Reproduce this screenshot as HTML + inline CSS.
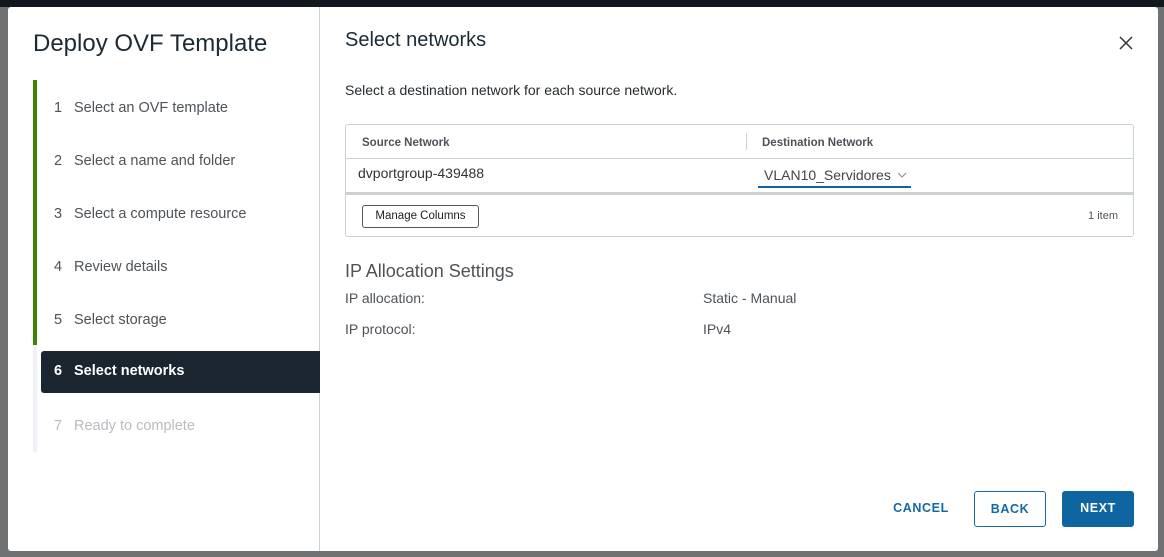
<!DOCTYPE html>
<html><head><meta charset="utf-8"><style>
*{box-sizing:border-box;margin:0;padding:0}
body{width:1164px;height:557px;overflow:hidden;background:#6f7173;font-family:"Liberation Sans",sans-serif;position:relative}
.top{position:absolute;left:0;top:0;width:1164px;height:7px;background:#111820}
.modal{position:absolute;left:8px;top:7px;width:1150px;height:544px;background:#fff;border-radius:3px;overflow:hidden}
.left{position:absolute;left:0;top:0;width:312px;height:544px;border-right:1px solid #c9d1d9}
.title{position:absolute;left:25px;top:23px;font-size:24px;color:#1c2a33}
.prog{position:absolute;left:25px;top:73px;width:4px;height:265px;background:#3c8500}
.prog2{position:absolute;left:25px;top:338px;width:4px;height:107px;background:#eef1f5}
.step{position:absolute;left:46px;font-size:14.5px;color:#4d5358}
.step span{display:inline-block;width:20px}
.active{position:absolute;left:33px;top:344px;width:279px;height:42px;background:#1b2530;border-radius:3px 0 0 3px;color:#fff;font-weight:bold;font-size:14.5px;padding:12px 0 0 13px}
.active span{display:inline-block;width:20px}
.h{position:absolute;left:337px;top:22px;font-size:20px;color:#1c2a33}
.x{position:absolute;left:1111px;top:29px}
.desc{position:absolute;left:337px;top:75px;font-size:14px;color:#262c30}
.grid{position:absolute;left:337px;top:117px;width:789px;height:113px;border:1px solid #c9d1d9;border-radius:3px}
.hdr{position:absolute;top:0;left:0;width:100%;height:34px;border-bottom:1px solid #c9d1d9;font-size:11.5px;font-weight:bold;color:#4d5358}
.hdr div{position:absolute;top:12px}
.hdr .sep{position:absolute;left:400px;top:8px;width:1px;height:17px;background:#c9d1d9}
.row{position:absolute;top:34px;left:0;width:100%;height:36px;border-bottom:3px solid #cdd1d4;font-size:14px;color:#333}
.foot{position:absolute;top:72px;left:0;width:100%}
.btn{position:absolute;left:16px;top:8px;width:117px;height:23px;border:1px solid #565656;border-radius:3px;font-size:11.5px;color:#222;text-align:center;line-height:21px}
.lbl{position:absolute;font-size:14px;color:#4d5358}
.b{position:absolute;top:484px;height:36px;font-size:12.5px;font-weight:bold;letter-spacing:.6px;text-align:center;line-height:34px;border-radius:3px}
</style></head><body>
<div class="top"></div>
<div class="modal">
 <div class="left">
  <div class="title">Deploy OVF Template</div>
  <div class="prog"></div><div class="prog2"></div>
  <div class="step" style="top:93px"><span>1</span>Select an OVF template</div>
  <div class="step" style="top:146px"><span>2</span>Select a name and folder</div>
  <div class="step" style="top:199px"><span>3</span>Select a compute resource</div>
  <div class="step" style="top:252px"><span>4</span>Review details</div>
  <div class="step" style="top:305px"><span>5</span>Select storage</div>
  <div class="active"><span>6</span>Select networks</div>
  <div class="step" style="top:411px;color:#b8bcc0"><span>7</span>Ready to complete</div>
 </div>
 <div class="h">Select networks</div>
 <svg class="x" width="14" height="14" viewBox="0 0 14 14"><path d="M1 1L13 13M13 1L1 13" stroke="#333" stroke-width="1.5"/></svg>
 <div class="desc">Select a destination network for each source network.</div>
 <div class="grid">
  <div class="hdr"><div style="left:16px">Source Network</div><div class="sep"></div><div style="left:416px">Destination Network</div></div>
  <div class="row"><div style="position:absolute;left:12px;top:6px">dvportgroup-439488</div>
   <div style="position:absolute;left:412px;top:8px;width:153px;height:21px;border-bottom:2px solid #0f62a3;padding-left:6px;color:#444">VLAN10_Servidores <svg width="10" height="6" viewBox="0 0 10 6" style="vertical-align:2px;margin-left:2px"><path d="M1 1L5 5L9 1" stroke="#888" fill="none"/></svg></div></div>
  <div class="foot"><div class="btn">Manage Columns</div><div style="position:absolute;right:15px;top:13px;font-size:11px;color:#555">1 item</div></div>
 </div>
 <div style="position:absolute;left:337px;top:254px;font-size:18px;color:#4d5358">IP Allocation Settings</div>
 <div class="lbl" style="left:337px;top:283px">IP allocation:</div>
 <div class="lbl" style="left:695px;top:283px">Static - Manual</div>
 <div class="lbl" style="left:337px;top:314px">IP protocol:</div>
 <div class="lbl" style="left:695px;top:314px">IPv4</div>
 <div class="b" style="left:870px;width:86px;color:#1569a8">CANCEL</div>
 <div class="b" style="left:966px;width:72px;border:1px solid #1569a8;color:#1569a8">BACK</div>
 <div class="b" style="left:1054px;width:72px;background:#0f65a0;color:#fff">NEXT</div>
</div>
</body></html>
